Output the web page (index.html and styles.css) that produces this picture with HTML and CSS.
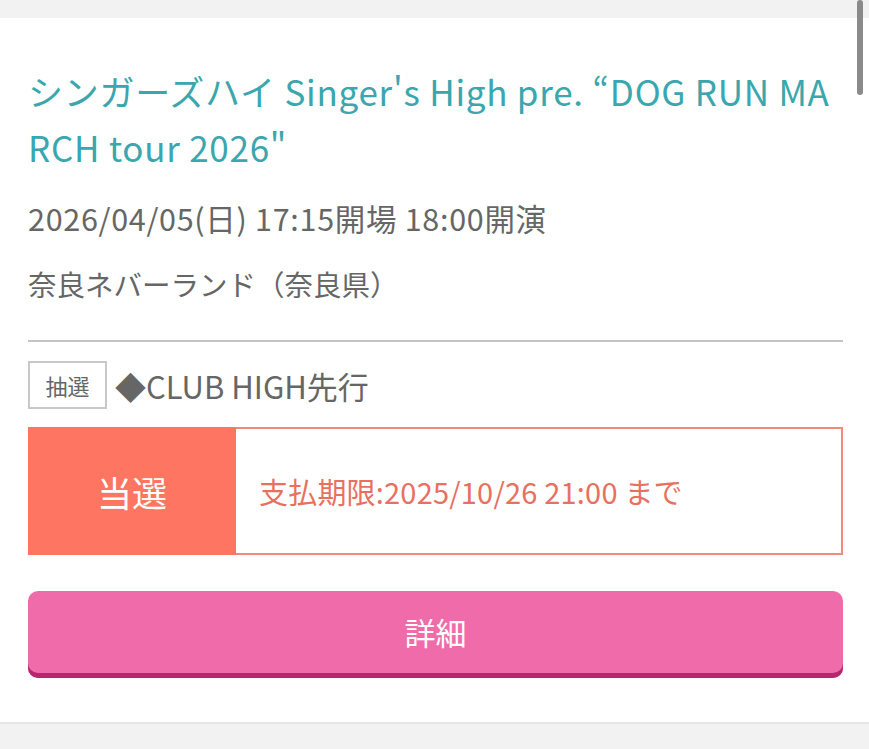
FILE: index.html
```html
<!DOCTYPE html>
<html lang="ja">
<head>
<meta charset="utf-8">
<link rel="stylesheet" href="styles.css">
</head>
<body>
<div class="top-band"></div>
<main class="card">
  <h1 class="title">シンガーズハイ Singer's High pre. “DOG RUN MARCH tour 2026"</h1>
  <p class="date">2026/04/05(日) 17:15開場 18:00開演</p>
  <p class="venue">奈良ネバーランド（奈良県）</p>
  <hr class="divider">
  <div class="sale">
    <span class="badge">抽選</span>
    <span class="sale-name">◆CLUB HIGH先行</span>
  </div>
  <div class="status">
    <div class="status-label">当選</div>
    <div class="status-info">支払期限:2025/10/26 21:00 まで</div>
  </div>
  <button class="detail-btn">詳細</button>
</main>
<div class="footer-band"></div>
<div class="scrollbar"></div>
</body>
</html>
```
FILE: styles.css
```css
html, body {
  margin: 0;
  padding: 0;
}
body {
  background: #f2f2f2;
  font-family: "Noto Sans CJK JP", "Noto Sans", sans-serif;
  color: #666;
  overflow: hidden;
  height: 749px;
}
.top-band {
  height: 18px;
  background: #f2f2f2;
}
.card {
  background: #fff;
  padding: 45px 26px 44px 28px;
  border-bottom: 2px solid #e6e6e6;
}
.title {
  margin: 0;
  font-size: 35px;
  font-weight: 400;
  line-height: 56px;
  letter-spacing: 0.75px;
  color: #3aa6ae;
  word-break: break-all;
}
.date {
  margin: 23px 0 0;
  font-size: 30.5px;
  line-height: 40px;
  letter-spacing: 0.7px;
  color: #666;
}
.venue {
  margin: 26px 0 0;
  font-size: 28.5px;
  line-height: 40px;
  color: #666;
}
.divider {
  margin: 36px 0 0;
  border: 0;
  height: 2px;
  background: #c4c4c4;
}
.sale {
  display: flex;
  align-items: center;
  gap: 8px;
  margin-top: 19px;
}
.badge {
  box-sizing: border-box;
  width: 79px;
  height: 48px;
  border: 2px solid #c8c8c8;
  display: flex;
  align-items: center;
  justify-content: center;
  font-size: 22px;
  color: #666;
}
.sale-name {
  font-size: 31px;
  color: #666;
}
.status {
  display: flex;
  margin-top: 18px;
  height: 128px;
}
.status-label {
  width: 208px;
  background: #fe7662;
  color: #fff;
  font-size: 35px;
  display: flex;
  align-items: center;
  justify-content: center;
}
.status-info {
  flex: 1;
  box-sizing: border-box;
  border: 2px solid #f28a7a;
  border-left: 0;
  display: flex;
  align-items: center;
  padding-left: 23px;
  font-size: 29px;
  letter-spacing: 0.2px;
  color: #e8705f;
}
.detail-btn {
  display: block;
  width: 100%;
  margin-top: 36px;
  height: 87px;
  border: 0;
  border-radius: 10px;
  background: #ef6ba9;
  box-shadow: inset 0 -5px 0 #b7276f;
  color: #fff;
  font-family: inherit;
  font-size: 31px;
  padding: 0 0 6px;
}
.footer-band {
  height: 40px;
  background: #f2f2f2;
}
.scrollbar {
  position: fixed;
  top: 0;
  right: 6px;
  width: 6px;
  height: 95px;
  border-radius: 3px;
  background: #8a8a8a;
}
```
